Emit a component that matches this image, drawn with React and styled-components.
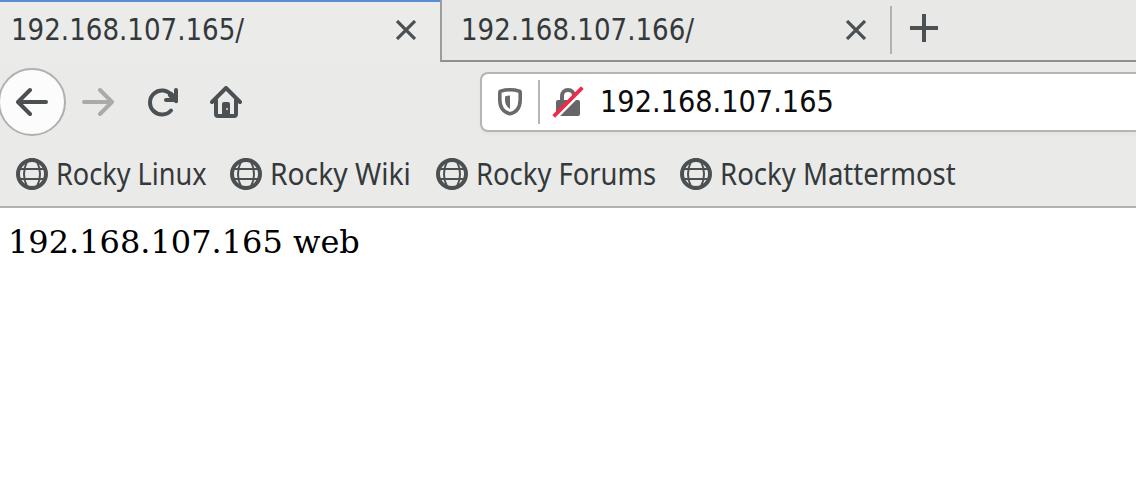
import React from "react";
import styled, { createGlobalStyle } from "styled-components";

const Global = createGlobalStyle`
  * { box-sizing: border-box; }
  body { margin: 0; background: #fff; overflow: hidden; }
`;

const Browser = styled.div`
  width: 100%;
  height: 484px;
  overflow: hidden;
  background: #fff;
`;

const Chrome = styled.header`
  height: 208px;
  background: #eaeae9;
  border-bottom: 2px solid #b3b3b1;
`;

const TabBar = styled.div`
  display: flex;
  height: 62px;
`;

const Tab = styled.div`
  display: flex;
  align-items: flex-start;
  flex: none;
  width: ${(p) => (p.$active ? 440 : 450)}px;
  padding-left: ${(p) => (p.$active ? 11 : 19)}px;
  background: ${(p) => (p.$active ? "#ebebea" : "#e8e8e6")};
  border-top: ${(p) => (p.$active ? "2px solid #5a8dd5" : "0")};
  border-left: ${(p) => (p.$active ? "0" : "2px solid #9c9c9a")};
  border-bottom: ${(p) => (p.$active ? "0" : "2px solid #90908e")};
`;

const TabTitle = styled.div`
  width: 385px;
  height: 36px;
  margin-top: ${(p) => (p.$active ? 10 : 12)}px;
`;

const Address = styled.span`
  display: inline-block;
  font: 30px/36px "DejaVu Sans Condensed", "DejaVu Sans", sans-serif;
  font-stretch: condensed;
  white-space: nowrap;
  color: ${(p) => p.$color};
  transform: scaleX(${(p) => p.$fit});
  transform-origin: left;
`;

const CloseIcon = styled.svg`
  flex: none;
  width: 20px;
  height: 20px;
  margin-top: ${(p) => (p.$active ? 18 : 20)}px;
`;

const TabTail = styled.div`
  flex: 1;
  display: flex;
  background: #e8e8e6;
  border-bottom: 2px solid #90908e;
`;

const TabDivider = styled.div`
  width: 2px;
  height: 48px;
  margin-top: 6px;
  background: #b2b2b0;
`;

const PlusIcon = styled.svg`
  width: 28px;
  height: 28px;
  margin: 14px 0 0 18px;
`;

const NavBar = styled.div`
  display: flex;
  align-items: center;
  height: 80px;
`;

const BackButton = styled.div`
  display: flex;
  align-items: center;
  justify-content: center;
  flex: none;
  width: 68px;
  height: 68px;
  margin-left: -2px;
  border: 2px solid #b0b0ae;
  border-radius: 50%;
  background: #fcfcfc;
`;

const NavIcon = styled.svg`
  display: block;
  flex: none;
  width: 32px;
  height: 32px;
  margin-left: ${(p) => p.$gap || 0}px;
`;

const UrlBar = styled.div`
  display: flex;
  align-items: center;
  flex: 1;
  height: 60px;
  margin-left: 238px;
  padding-left: 12px;
  border: 2px solid #b5b5b2;
  border-right: 0;
  border-radius: 8px 0 0 8px;
  background: #fff;
  box-shadow: 0 2px 4px rgba(0, 0, 0, 0.04);
`;

const UrlDivider = styled.div`
  width: 2px;
  height: 44px;
  margin: 0 12px 0 12px;
  background: #b5b5b1;
`;

const UrlText = styled.div`
  height: 36px;
  margin: 0 0 0 16px;
`;

const Bookmarks = styled.nav`
  display: flex;
  align-items: center;
  height: 64px;
  padding-left: 16px;
`;

const Bookmark = styled.div`
  display: flex;
  align-items: center;
  flex: none;
  width: ${(p) => p.$width}px;
`;

const Label = styled.span`
  display: inline-block;
  margin-left: 8px;
  font: 30px/36px "Noto Sans", sans-serif;
  white-space: nowrap;
  color: #34393c;
  transform: scaleX(${(p) => p.$fit});
  transform-origin: left;
`;

const Page = styled.main`
  padding: 15px 8px;
  font: 32px/38px "DejaVu Serif", serif;
  color: #000;
`;

const ink = "#4b5053";

const Close = ({ active }) => (
  <CloseIcon $active={active} viewBox="0 0 20 20" fill="none" stroke={ink} strokeWidth="3.2">
    <path d="M1 1 19 19M19 1 1 19" />
  </CloseIcon>
);

const Arrow = ({ color, flip, gap }) => (
  <NavIcon $gap={gap} viewBox="0 0 32 32" fill="none" stroke={color} strokeWidth="4" strokeLinecap="round" strokeLinejoin="round">
    <path d={flip ? "M2 16H29M18 4 30 16 18 28" : "M30 16H3M14 4 2 16 14 28"} />
  </NavIcon>
);

const Reload = () => (
  <NavIcon $gap={32} viewBox="0 0 32 32" fill="none" stroke={ink} strokeWidth="4" strokeLinecap="round" strokeLinejoin="round">
    <path d="M25.5 9.2A12 12 0 1 0 25 24.5" />
    <path d="M30 4V14H20" />
    <path d="M25 9 30 14" strokeWidth="6" />
  </NavIcon>
);

const Home = () => (
  <NavIcon $gap={32} viewBox="0 0 32 32" fill="none" stroke={ink} strokeWidth="4" strokeLinecap="round" strokeLinejoin="round">
    <path d="M2 16 16 2 30 16M6 14V28Q6 30 8 30H24Q26 30 26 28V14" />
    <path d="M12 30V18Q12 16 14 16H18Q20 16 20 18V30Z" fill={ink} stroke="none" />
    <path d="M16 22h2v2h-2z" fill="#b9bbbb" stroke="none" />
  </NavIcon>
);

const Globe = () => (
  <NavIcon viewBox="0 0 32 32" fill="none" stroke={ink}>
    <circle cx="16" cy="16" r="14" strokeWidth="4" />
    <ellipse cx="16" cy="16" rx="8" ry="15" strokeWidth="2" />
    <path d="M3 11H29M3 21H29" strokeWidth="2" />
  </NavIcon>
);

const Shield = () => (
  <NavIcon viewBox="0 0 32 32" fill="none">
    <path d="M16 3.8Q21 3.8 25.5 5.2Q26.2 5.5 26.2 6.5V14Q26 25.5 16 27.8Q6 25.5 5.8 14V6.5Q5.8 5.5 6.5 5.2Q11 3.8 16 3.8Z" stroke="#6a6a6a" strokeWidth="3.6" strokeLinejoin="round" />
    <path d="M16 9.5V23Q11 20 11 14V10.5Q13 9.5 16 9.5Z" fill="#6a6a6a" />
  </NavIcon>
);

const InsecureLock = () => (
  <NavIcon viewBox="0 0 32 32" fill="none">
    <path d="M10 16V10a6 6 0 0 1 12 0V16" stroke="#6a6a6a" strokeWidth="4" />
    <path d="M6 14H26Q28 14 28 16V28Q28 30 26 30H6Q4 30 4 28V16Q4 14 6 14Z" fill="#666" />
    <path d="M5 31 32 4" stroke="#fff" strokeWidth="3" />
    <path d="M3 29 29 3" stroke="#ed2b4b" strokeWidth="3.8" strokeLinecap="square" />
  </NavIcon>
);

const bookmarks = [
  { name: "Rocky Linux", width: 214, fit: 0.903 },
  { name: "Rocky Wiki", width: 206, fit: 0.94 },
  { name: "Rocky Forums", width: 244, fit: 0.913 },
  { name: "Rocky Mattermost", width: 290, fit: 0.918 },
];

export default function App() {
  return (
    <Browser>
      <Global />
      <Chrome>
        <TabBar>
          <Tab $active>
            <TabTitle $active><Address $color="#34393c" $fit={0.968}>192.168.107.165/</Address></TabTitle>
            <Close active />
          </Tab>
          <Tab>
            <TabTitle><Address $color="#34393c" $fit={0.968}>192.168.107.166/</Address></TabTitle>
            <Close />
          </Tab>
          <TabTail>
            <TabDivider />
            <PlusIcon viewBox="0 0 28 28" stroke={ink} strokeWidth="4">
              <path d="M14 0V28M0 14H28" />
            </PlusIcon>
          </TabTail>
        </TabBar>
        <NavBar>
          <BackButton><Arrow color={ink} /></BackButton>
          <Arrow color="#aaaaa9" flip gap={16} />
          <Reload />
          <Home />
          <UrlBar>
            <Shield />
            <UrlDivider />
            <InsecureLock />
            <UrlText><Address $color="#0c0c0d" $fit={1.009}>192.168.107.165</Address></UrlText>
          </UrlBar>
        </NavBar>
        <Bookmarks>
          {bookmarks.map((b) => (
            <Bookmark key={b.name} $width={b.width}>
              <Globe />
              <Label $fit={b.fit}>{b.name}</Label>
            </Bookmark>
          ))}
        </Bookmarks>
      </Chrome>
      <Page>192.168.107.165 web</Page>
    </Browser>
  );
}
